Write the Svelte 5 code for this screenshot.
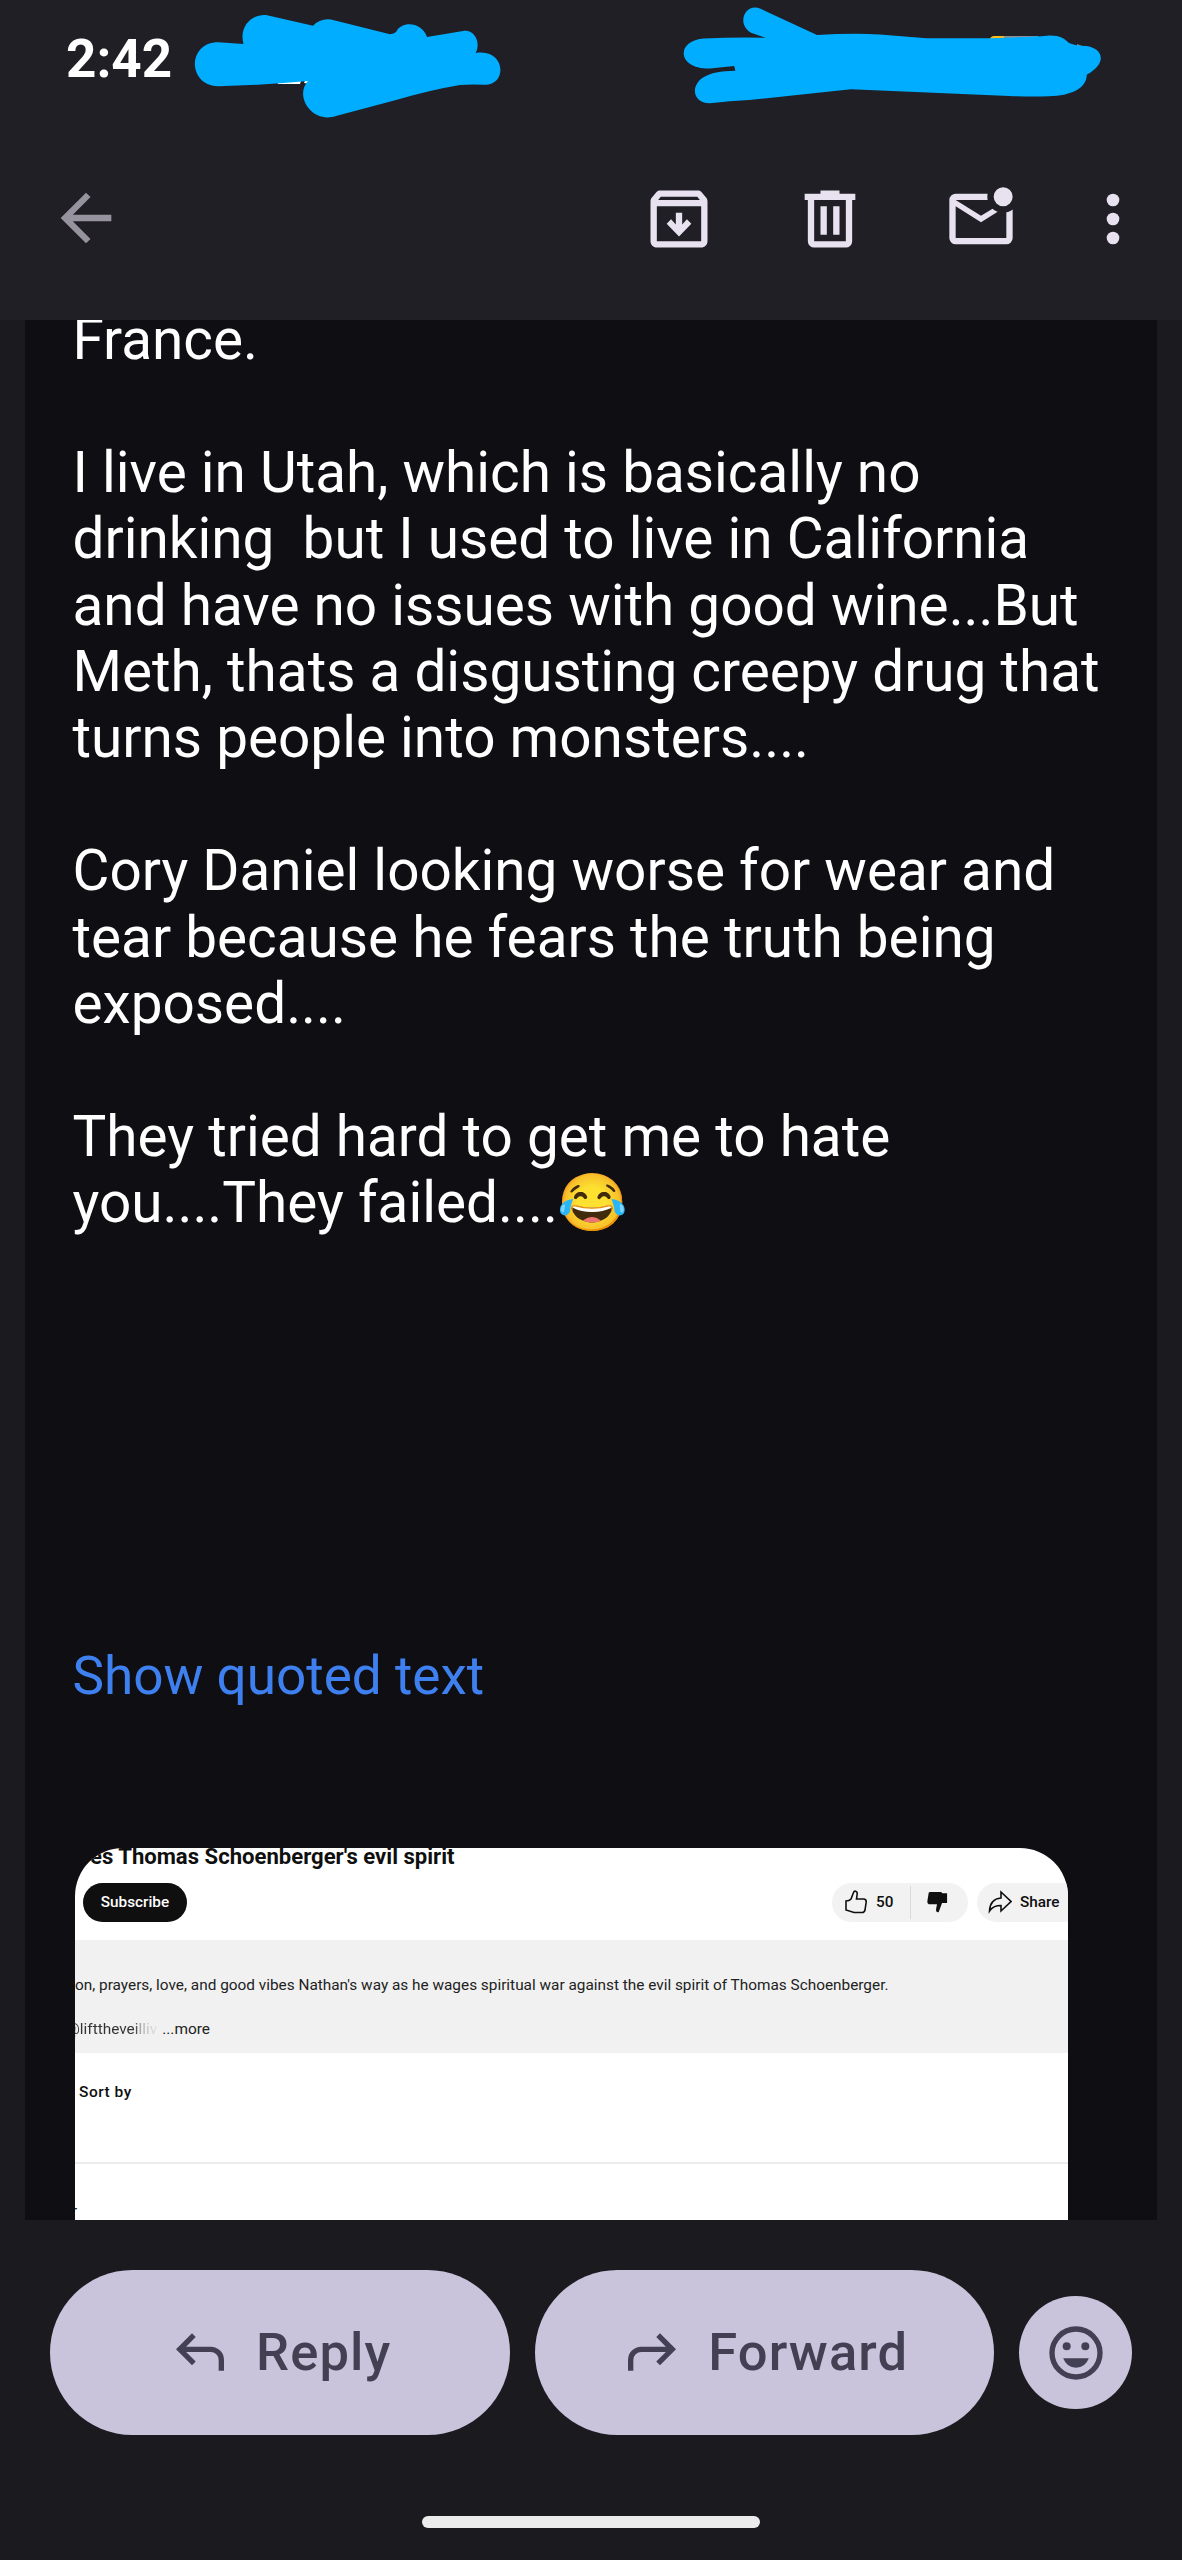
<script lang="ts">
    const messageLines: string[] = [
        'France.',
        '',
        'I live in Utah, which is basically no',
        'drinking  but I used to live in California',
        'and have no issues with good wine...But',
        'Meth, thats a disgusting creepy drug that',
        'turns people into monsters....',
        '',
        'Cory Daniel looking worse for wear and',
        'tear because he fears the truth being',
        'exposed....',
        '',
        'They tried hard to get me to hate',
        'you....They failed....😂'
    ];
    const message = messageLines.join('\n');

    const actions = [
        {
            label: 'Archive',
            path: 'M20.54 5.23l-1.39-1.68C18.88 3.21 18.47 3 18 3H6c-.47 0-.88.21-1.16.55L3.46 5.23C3.17 5.57 3 6.02 3 6.5V19c0 1.1.9 2 2 2h14c1.1 0 2-.9 2-2V6.5c0-.48-.17-.93-.46-1.27zM6.24 5h11.52l.83 1H5.42l.82-1zM5 19V8h14v11H5zM12 17.5l3.9-4-1.4-1.4-1.5 1.6V10h-2v3.7l-1.5-1.6-1.4 1.4z'
        },
        {
            label: 'Delete',
            path: 'M7 21q-.825 0-1.412-.587T5 19V6H4V4h5V3h6v1h5v2h-1v13q0 .825-.587 1.413T17 21H7ZM17 6H7v13h10V6ZM9 17h2V8H9v9Zm4 0h2V8h-2v9Z'
        },
        {
            label: 'Mark as unread',
            path: 'M20 20H4q-.825 0-1.412-.587T2 18V6q0-.825.588-1.412T4 4h10.1q-.1.5-.1 1t.1 1H4l8 5 3.65-2.275q.35.325.763.563t.862.412L12 13 4 8v10h16V9.9q.575-.125 1.075-.35T22 9v9q0 .825-.587 1.413T20 20ZM19 8q-1.25 0-2.125-.875T16 5t.875-2.125T19 2t2.125.875T22 5t-.875 2.125T19 8Z'
        }
    ];
</script>

<div class="screen">
    <header class="top">
        <div class="status-bar">
            <span class="clock">2:42</span>
            <svg class="scribbles" viewBox="0 0 1182 130">
                <path fill="#fff" d="M277 81h24l-1 3h-22zM304 83l2-5h8l-3 6z" />
                <path fill="#fbbc1a" d="M989 40q2-4 5-4h10v4z" />
                <path fill="#8d8f94" d="M1004 36h34v4h-34zM1077 44l5 2-5 1z" />
                <path
                    class="ink"
                    d="M218.6 42.3L243.5 44C239 28 250 14 266 15L313 25.7Q320 18 331 19.4L390 34.3Q394 34 396 32C402 20 422 22 427 37L463 31C475 29 481 43 475.7 53C506 48 508 86 484 84.7Q470 84 460 85Q430 90 396 100L336 116C312 124 294 96 308 81Q265 85 218.6 86.3C187 86 187 42 218.6 42.3Z"
                />
                <path
                    class="ink"
                    d="M751 32.7C736 24 745 3 760 8.5L817 35Q851 33 880 34.4L926.5 38.3H990Q1030 37 1047 35.7C1060 35 1063 38 1069 43Q1076 46 1086 46C1103 48 1108 63 1086.7 74.7C1087 88 1071 96 1049 96.3Q1030 97 1009 96L851 89.3L749 100Q730 101 710 103.3C691 103 691 84 704 77Q713 71 735.4 70.7L734.2 66L710 68.6C676 69 676 40 704 38.4Q735 37 765.5 37.7Z"
                />
            </svg>
        </div>

        <nav class="toolbar">
            <svg class="icon back" viewBox="0 0 24 24" aria-label="Back">
                <path d="m12 20-8-8 8-8 1.425 1.4L7.85 11H20v2H7.825l5.6 5.6L12 20Z" />
            </svg>
            <div class="actions">
                {#each actions as action}
                    <svg class="icon" viewBox="0 0 24 24" aria-label={action.label}>
                        <path d={action.path} />
                    </svg>
                {/each}
            </div>
            <svg class="icon more" viewBox="0 0 24 24" aria-label="More options">
                <circle cx="12" cy="6" r="2" />
                <circle cx="12" cy="12" r="2" />
                <circle cx="12" cy="18" r="2" />
            </svg>
        </nav>
    </header>

    <main class="mail">
        <div class="message">{message}</div>
        <div class="quoted">Show quoted text</div>

        <section class="attachment">
            <h3 class="video-title">es Thomas Schoenberger's evil spirit</h3>
            <div class="video-row">
                <span class="subscribe">Subscribe</span>
                <div class="votes">
                    <svg class="vote" viewBox="0 0 24 24">
                        <path
                            class="line"
                            d="M2 11Q5.5 11 7 9L9.5 2.5Q10 1 11.5 1.2Q13.5 1.5 13.2 4L12.5 9H20Q22.5 9.5 22.2 12L21 20Q20.5 22.5 18 22.5H10L2 20Z"
                        />
                    </svg>
                    <span class="count">50</span>
                    <svg class="vote down" viewBox="0 0 24 24">
                        <path d="M3 1.5Q3.5 1 4.5 1H16.5L18 2.5H23V13H17.5L14 22.5Q13.5 23.5 12 23Q10.5 22 11 19.5L12 14.5H3Q1 14 1.5 11Z" />
                    </svg>
                </div>
                <div class="share">
                    <svg class="vote" viewBox="0 0 24 24">
                        <path class="line" d="M13 2L23 11.5L13 21V15.5Q5 15.5 1.5 21Q2 9 13 8Z" />
                    </svg>
                    <span>Share</span>
                </div>
            </div>
            <div class="description">
                <p class="summary">on, prayers, love, and good vibes Nathan's way as he wages spiritual war against the evil spirit of Thomas Schoenberger.</p>
                <p class="links"><span class="handle">@lifttheveilliv</span><span>...more</span></p>
            </div>
            <div class="sort">Sort by</div>
            <div class="rest">r</div>
        </section>
    </main>

    <footer class="bottom">
        <div class="replies">
            <button class="pill">
                <svg class="pill-icon" viewBox="0 0 24 24">
                    <path d="M19 19v-4q0-1.25-.875-2.125T16 12H6.8l3.6 3.6L9 17l-6-6 6-6 1.4 1.4L6.8 10H16q2.075 0 3.538 1.463T21 15v4Z" />
                </svg>
                <span>Reply</span>
            </button>
            <button class="pill">
                <svg class="pill-icon" viewBox="0 0 24 24">
                    <path d="M5 19v-4q0-1.25.875-2.125T8 12h9.2l-3.6 3.6L15 17l6-6-6-6-1.4 1.4 3.6 3.6H8q-2.075 0-3.538 1.463T3 15v4Z" />
                </svg>
                <span>Forward</span>
            </button>
            <button class="react" aria-label="Add reaction">
                <svg class="pill-icon" viewBox="0 0 24 24">
                    <circle class="ring" cx="12" cy="12" r="9" />
                    <circle cx="8.5" cy="9.5" r="1.5" />
                    <circle cx="15.5" cy="9.5" r="1.5" />
                    <path d="M7.2 14h9.6Q15.5 17.5 12 17.5T7.2 14Z" />
                </svg>
            </button>
        </div>
        <div class="home-bar"></div>
    </footer>
</div>

<style>
    :global(body) {
        background-color: #1b1a1f;
    }

    .screen {
        width: 1182px;
        height: 2560px;
        display: flex;
        flex-direction: column;
        overflow: hidden;
        background-color: #1b1a1f;
        font-family: Roboto, 'Liberation Sans', 'Noto Color Emoji', sans-serif;
    }

    .top {
        height: 320px;
        flex-shrink: 0;
        background-color: #201f25;
    }

    .status-bar {
        position: relative;
        height: 130px;
        box-sizing: border-box;
        padding: 28px 0 0 66px;
    }

    .clock {
        color: #fff;
        font-size: 53px;
        font-weight: 700;
        line-height: 62px;
    }

    .scribbles {
        position: absolute;
        top: 0;
        left: 0;
        width: 1182px;
        height: 130px;
    }

    .ink {
        fill: #00adff;
    }

    .toolbar {
        display: flex;
        align-items: center;
        padding: 50px 31px 0 48px;
    }

    .icon {
        display: block;
        width: 76px;
        height: 76px;
        fill: #e8e1ef;
    }

    .icon.back {
        margin-bottom: 2px;
        fill: #96929e;
    }

    .actions {
        display: flex;
        gap: 75px;
        margin-left: auto;
        margin-right: 56px;
    }

    .mail {
        width: 1132px;
        height: 1900px;
        flex-shrink: 0;
        margin: 0 auto;
        box-sizing: border-box;
        padding: 0 89px 0 47.5px;
        overflow: hidden;
        background-color: #0f0e13;
    }

    .message {
        margin-top: -13px;
        color: #fff;
        font-size: 56.7px;
        line-height: 66.4px;
        white-space: pre;
    }

    .quoted {
        margin-top: 407px;
        color: #3f80f0;
        font-size: 53.1px;
        line-height: 64px;
    }

    .attachment {
        width: 993px;
        height: 373px;
        margin: 140px 0 0 2.5px;
        box-sizing: border-box;
        overflow: hidden;
        border-radius: 48px 48px 0 0;
        background-color: #fff;
        color: #0f0f0f;
        font-size: 16px;
    }

    .video-title {
        margin: -5px 0 0 15px;
        font-size: 22.1px;
        font-weight: 700;
        line-height: 26px;
    }

    .video-row {
        display: flex;
        align-items: center;
        height: 39px;
        margin-top: 14px;
        font-size: 15.3px;
        font-weight: 500;
    }

    .subscribe {
        width: 104px;
        margin-left: 8px;
        border-radius: 20px;
        background-color: #0f0f0f;
        color: #fff;
        line-height: 39px;
        text-align: center;
    }

    .votes,
    .share {
        display: flex;
        align-items: center;
        height: 39px;
        box-sizing: border-box;
        background-color: #f2f2f2;
    }

    .votes {
        width: 136px;
        margin-left: auto;
        padding-left: 12px;
        border-radius: 20px;
    }

    .share {
        width: 91px;
        margin-left: 9px;
        padding-left: 11px;
        gap: 8px;
        border-radius: 20px 0 0 20px;
    }

    .vote {
        width: 24px;
        height: 24px;
        flex-shrink: 0;
        fill: #0f0f0f;
    }

    .vote .line {
        fill: none;
        stroke: #0f0f0f;
        stroke-width: 1.6;
    }

    .count {
        width: 34px;
        margin-left: 8px;
        border-right: 1px solid #d9d9d9;
        line-height: 33px;
    }

    .down {
        margin-left: 15px;
        width: 22px;
    }

    .description {
        height: 113px;
        margin-top: 18px;
        overflow: hidden;
        background-color: #f1f1f1;
        color: #222;
    }

    .description p {
        margin: 0;
        line-height: 20px;
        white-space: nowrap;
    }

    .description .summary {
        margin-top: 35px;
        font-size: 15.37px;
    }

    .description .links {
        display: flex;
        gap: 5px;
        margin: 24px 0 0 -9px;
        font-size: 15.4px;
    }

    .handle {
        background: linear-gradient(to right, #333 76%, #aaa 82%, #ddd 98%);
        background-clip: text;
        color: transparent;
    }

    .sort {
        height: 111px;
        box-sizing: border-box;
        padding: 29px 0 0 4px;
        border-bottom: 2px solid #ececec;
        font-size: 15.5px;
        font-weight: 500;
        letter-spacing: 0.5px;
        line-height: 20px;
    }

    .rest {
        margin: 38px 0 0 -3px;
        font-size: 15px;
    }

    .bottom {
        display: flex;
        flex-direction: column;
        align-items: center;
        padding-top: 50px;
    }

    .replies {
        display: flex;
        align-items: center;
        gap: 25px;
    }

    .pill,
    .react {
        display: flex;
        align-items: center;
        justify-content: center;
        padding: 0;
        border: none;
        background-color: #c9c3dc;
        color: #444054;
        font-family: inherit;
    }

    .pill {
        width: 459.5px;
        height: 165px;
        padding-bottom: 2px;
        gap: 24px;
        border-radius: 83px;
        font-size: 52.5px;
        font-weight: 500;
        letter-spacing: 1.1px;
    }

    .react {
        width: 113px;
        height: 113px;
        border-radius: 50%;
    }

    .pill-icon {
        width: 64px;
        height: 64px;
        fill: #444054;
    }

    .ring {
        fill: none;
        stroke: #444054;
        stroke-width: 2;
    }

    .home-bar {
        width: 338px;
        height: 12px;
        margin-top: 81px;
        border-radius: 6px;
        background-color: #ececec;
    }
</style>
